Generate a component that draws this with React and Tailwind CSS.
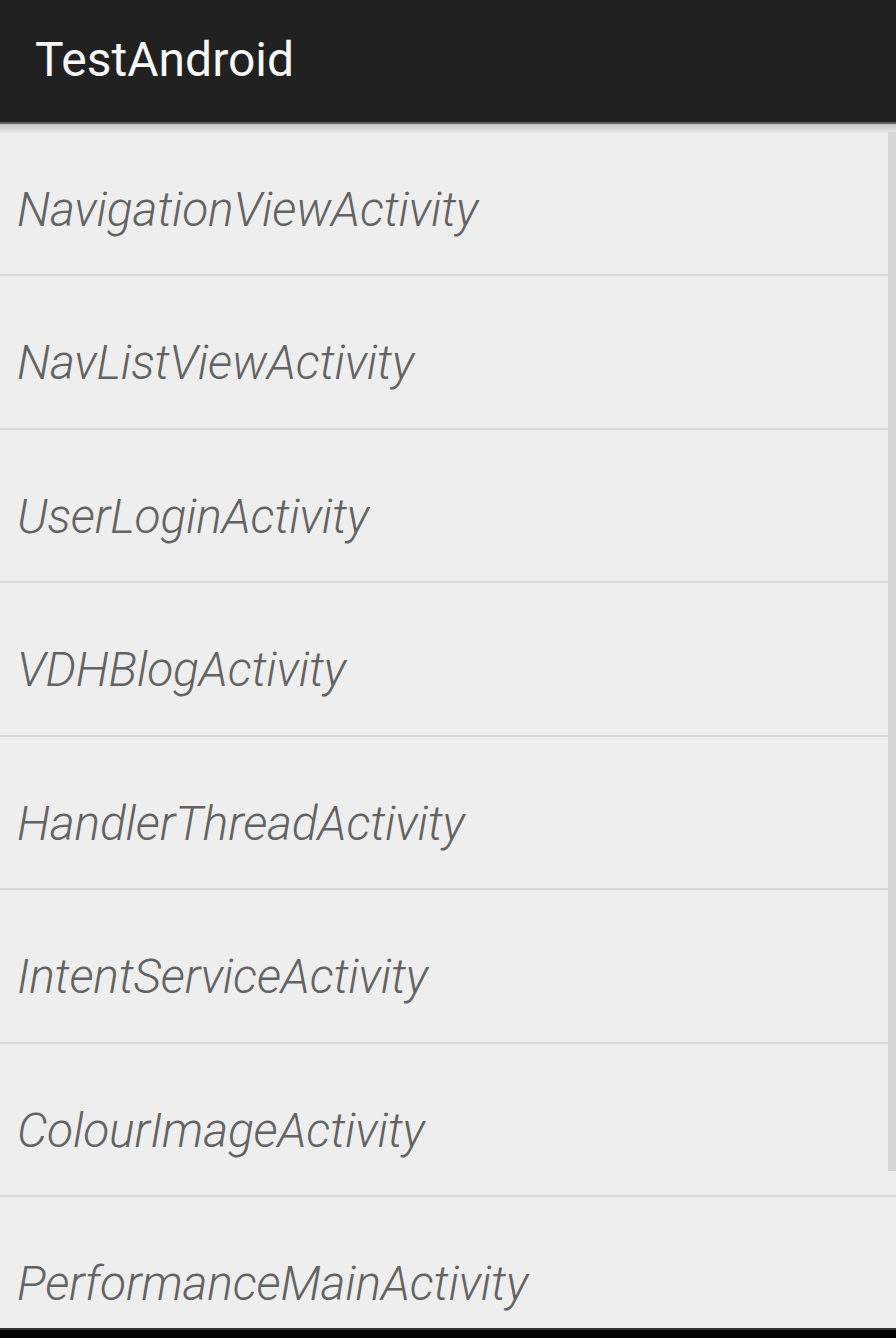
import React from "react";

const items = [
  ["NavigationViewActivity", "h-[150px]", "pt-[62px]"],
  ["NavListViewActivity", "h-[152px]", "pt-[63px]"],
  ["UserLoginActivity", "h-[151px]", "pt-[63px]"],
  ["VDHBlogActivity", "h-[152px]", "pt-[63px]"],
  ["HandlerThreadActivity", "h-[151px]", "pt-[63px]"],
  ["IntentServiceActivity", "h-[152px]", "pt-[63px]"],
  ["ColourImageActivity", "h-[151px]", "pt-[63px]"],
];

export default function App() {
  return (
    <div
      className="w-[896px] h-[1338px] bg-[#eeeeee] flex flex-col overflow-hidden relative"
      style={{ fontFamily: "Roboto, 'Noto Sans', sans-serif" }}
    >
      <div className="h-[122px] bg-[#212121] shrink-0 pl-[35px] pt-[36px]">
        <span className="text-[48px] leading-[48px] text-[#f7f7f7]">TestAndroid</span>
      </div>
      <div className="h-[2px] bg-[#5e5e5e] shrink-0" />
      <div className="relative flex-1 flex flex-col min-h-0">
        <div className="absolute top-0 left-0 right-0 h-[10px] bg-gradient-to-b from-[#c4c4c4] to-[#eeeeee] pointer-events-none" />
        <div className="absolute right-0 top-[8px] w-[8px] h-[1039px] bg-[#d6d6d6]" />
        {items.map(([name, h, pt], i) => (
          <div key={i} className="flex flex-col shrink-0">
            <div className={`${h} ${pt} pl-[17px]`}>
              <span className="text-[48px] leading-[48px] italic font-light tracking-[-0.2px] text-[#636363]">{name}</span>
            </div>
            <div className="h-[2px] bg-[#d9d9d9]" />
          </div>
        ))}
        <div className="flex-1 pl-[17px] pt-[63px]">
          <span className="text-[48px] leading-[48px] italic font-light tracking-[-0.2px] text-[#636363]">PerformanceMainActivity</span>
        </div>
      </div>
      <div className="h-[2px] bg-[#333333] shrink-0" />
      <div className="h-[8px] bg-black shrink-0" />
    </div>
  );
}
